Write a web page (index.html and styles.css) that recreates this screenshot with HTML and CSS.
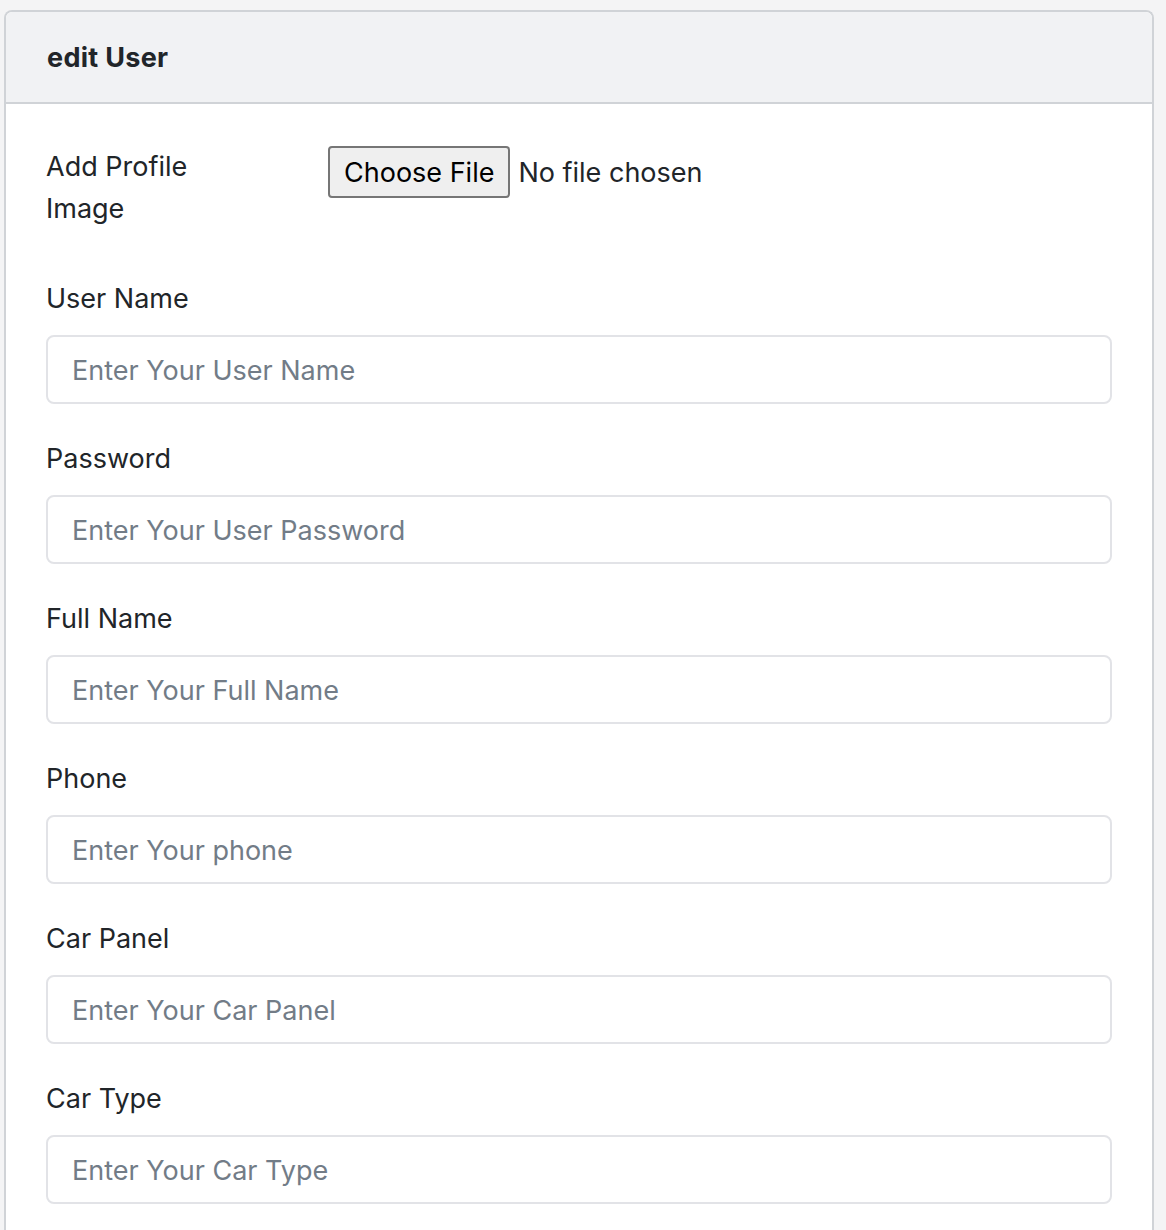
FILE: index.html
```html
<!DOCTYPE html>
<html lang="en">
<head>
<meta charset="utf-8">
<title>edit User</title>
<link rel="stylesheet" href="styles.css">
</head>
<body>
<div class="card">
  <div class="card-header">edit User</div>
  <div class="card-body">
    <div class="row-file">
      <label class="file-label">Add Profile Image</label>
      <div class="file-field">
        <span class="file-btn">Choose File</span>
        <span class="file-text">No file chosen</span>
      </div>
    </div>
    <div class="group">
      <label class="label">User Name</label>
      <input class="input" type="text" placeholder="Enter Your User Name">
    </div>
    <div class="group">
      <label class="label">Password</label>
      <input class="input" type="text" placeholder="Enter Your User Password">
    </div>
    <div class="group">
      <label class="label">Full Name</label>
      <input class="input" type="text" placeholder="Enter Your Full Name">
    </div>
    <div class="group">
      <label class="label">Phone</label>
      <input class="input" type="text" placeholder="Enter Your phone">
    </div>
    <div class="group">
      <label class="label">Car Panel</label>
      <input class="input" type="text" placeholder="Enter Your Car Panel">
    </div>
    <div class="group">
      <label class="label">Car Type</label>
      <input class="input" type="text" placeholder="Enter Your Car Type">
    </div>
  </div>
</div>
</body>
</html>
```

FILE: styles.css
```css
html, body {
  margin: 0;
  padding: 0;
  background: #f4f4f5;
}
body {
  padding: 10px 12px 0 4px;
  font-family: Inter, "Noto Sans", sans-serif;
  color: #212529;
}
.card {
  background: #ffffff;
  border: 2px solid #d0d3d7;
  border-bottom: none;
  border-radius: 8px 8px 0 0;
  overflow: hidden;
}
.card-header {
  background: #f1f2f4;
  border-bottom: 2px solid #d0d3d7;
  height: 92px;
  box-sizing: border-box;
  display: flex;
  align-items: center;
  padding: 0 41px;
  font-size: 27px;
  letter-spacing: 0.3px;
  font-weight: 700;
  color: #212529;
}
.card-body {
  padding: 42px 40px 40px 40px;
}
.row-file {
  display: grid;
  grid-template-columns: 282px 1fr;
  align-items: start;
  margin-bottom: 48px;
}
.file-label {
  font-size: 27px;
  line-height: 42px;
  width: 170px;
}
.file-field {
  display: flex;
  align-items: center;
  gap: 8px;
}
.file-btn {
  display: inline-flex;
  align-items: center;
  height: 52px;
  box-sizing: border-box;
  padding: 0 14px;
  background: #efefef;
  border: 2px solid #767676;
  border-radius: 4px;
  font-size: 27px;
  color: #000;
}
.file-text {
  font-size: 27px;
  color: #212529;
}
.group {
  display: flex;
  flex-direction: column;
  margin-bottom: 34px;
}
.label {
  font-size: 27px;
  line-height: 42px;
  margin-bottom: 15px;
}
.input {
  height: 69px;
  box-sizing: border-box;
  border: 2px solid #e2e3e7;
  border-radius: 8px;
  background: #ffffff;
  padding: 1px 24px 0;
  font-family: inherit;
  font-size: 27px;
  color: #495057;
  outline: none;
}
.input::placeholder {
  color: #727c87;
  opacity: 1;
}
```
